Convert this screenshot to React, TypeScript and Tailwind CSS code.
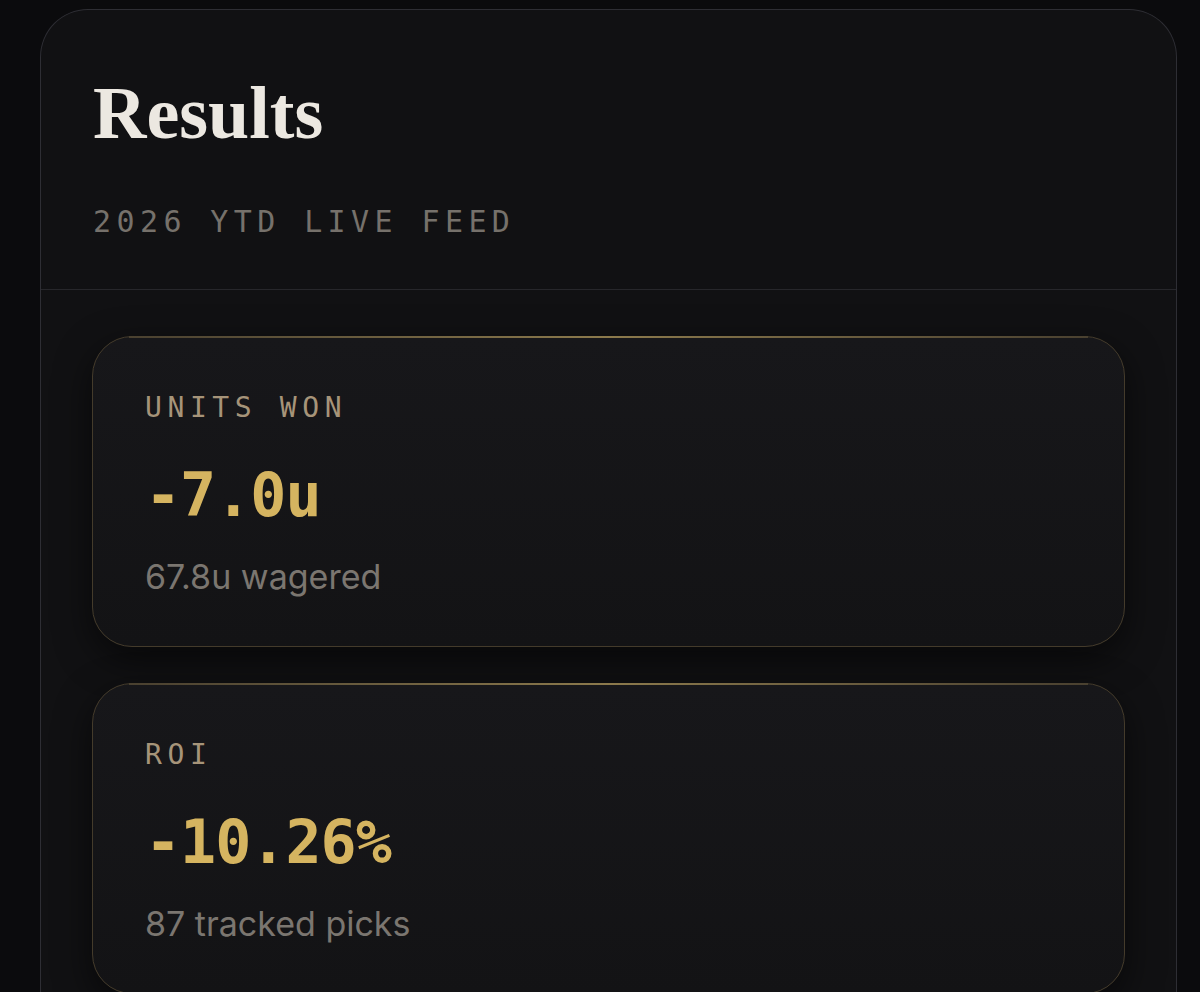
type StatProps = {
    label: string
    value: string
    note: string
}

const mono = "font-['DejaVu_Sans_Mono','Liberation_Mono',monospace]"

function StatCard({ label, value, note }: StatProps) {
    return (
        <div className="relative rounded-[40px] border border-[#443b2b] bg-gradient-to-b from-[#17171a] to-[#131315] px-[52px] pt-[57px] pb-[52px] shadow-[0_12px_36px_rgba(0,0,0,0.55)]">
            <div className="pointer-events-none absolute -top-px left-[36px] right-[36px] h-[2px] bg-gradient-to-r from-[#4a4130] via-[#8c7a4c] to-[#4a4130]" />
            <div className={`${mono} text-[28px] leading-none tracking-[0.2em] text-[#a69479]`}>
                {label}
            </div>
            <div className={`${mono} mt-[43px] text-[60px] font-bold leading-none tracking-[-1px] text-[#d5b460]`}>
                {value}
            </div>
            <div className="mt-[35px] font-['Inter',sans-serif] text-[34px] leading-none text-[#7b7670]">
                {note}
            </div>
        </div>
    )
}

export default function App() {
    return (
        <div className="h-[992px] overflow-hidden bg-[#0b0b0d] pt-[9px]">
            <div className="ml-[40px] w-[1137px] rounded-t-[48px] border border-b-0 border-[#2e2e34] bg-[#111113]">
                <header className="border-b border-[#27272b] px-[52px] pt-[66px] pb-[52px]">
                    <h1 className="font-['Liberation_Serif',serif] text-[74px] font-bold leading-none text-[#ece8e1]">
                        Results
                    </h1>
                    <p className={`${mono} mt-[57px] text-[30px] leading-none tracking-[0.18em] text-[#76716b]`}>
                        2026 YTD LIVE FEED
                    </p>
                </header>

                <div className="flex flex-col gap-[36px] px-[51px] pt-[46px] pb-[40px]">
                    <StatCard label="UNITS WON" value="-7.0u" note="67.8u wagered" />
                    <StatCard label="ROI" value="-10.26%" note="87 tracked picks" />
                </div>
            </div>
        </div>
    )
}
